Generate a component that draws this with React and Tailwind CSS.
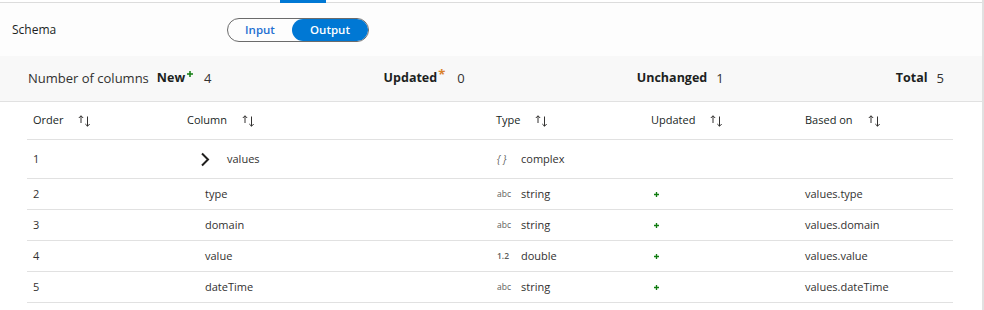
import React from "react";

function SortIcon() {
  return (
    <svg width="13" height="12" viewBox="0 0 13 12" fill="none" stroke="#323130" strokeWidth="1" className="ml-[15px] shrink-0">
      <path d="M3 0.8V8" />
      <path d="M0.8 3L3 0.8L5.2 3" />
      <path d="M9.5 1.5V11.2" />
      <path d="M7.3 9L9.5 11.2L11.7 9" />
    </svg>
  );
}

function Plus({ size = 6, w = 1.6 }) {
  return (
    <svg width={size} height={size} viewBox="0 0 6 6" stroke="#107c10" strokeWidth={w}>
      <path d="M3 0V6M0 3H6" />
    </svg>
  );
}

const rows = [
  { n: "2", name: "type", icon: "abc", type: "string", based: "values.type" },
  { n: "3", name: "domain", icon: "abc", type: "string", based: "values.domain" },
  { n: "4", name: "value", icon: "1.2", type: "double", based: "values.value" },
  { n: "5", name: "dateTime", icon: "abc", type: "string", based: "values.dateTime" },
];

function Header({ label }) {
  return (
    <div className="flex items-center px-[6px]">
      <span className="font-medium text-[#201f1e]">{label}</span>
      <SortIcon />
    </div>
  );
}

export default function App() {
  return (
    <div className="w-[984px] h-[310px] bg-white border-r-2 border-[#e1e1e1] font-['Open_Sans',sans-serif] text-[#323130] overflow-hidden">
      <div className="h-[3px] border-b border-[#dcdcdc]">
        <div className="ml-[280px] w-[46px] h-[3px] bg-[#0078d4]" />
      </div>

      <div className="h-[53px] flex items-center pl-[12px] bg-[#fdfdfd]">
        <div className="w-[215px] text-[12px] font-medium text-[#201f1e]">Schema</div>
        <div className="flex items-center h-[24px] w-[142px] rounded-full border border-[#6b6b6b] overflow-hidden">
          <div className="flex-1 text-center text-[11.5px] font-semibold text-[#1f6fd1]">Input</div>
          <div className="w-[76px] h-full rounded-full bg-[#0078d4] flex items-center justify-center text-[11.5px] font-semibold text-white">
            Output
          </div>
        </div>
      </div>

      <div className="h-[46px] bg-[#f8f8f8] border-b border-[#e1e1e1] flex items-center justify-between pl-[28px] pr-[38px] text-[13px]">
        <div className="flex items-center">
          <span>Number of columns</span>
          <span className="ml-[8px] font-bold text-[12.5px] text-[#201f1e]">New</span>
          <span className="ml-[2px] -mt-[9px]"><Plus size={6} w={1.5} /></span>
          <span className="ml-[11px]">4</span>
        </div>
        <div className="flex items-center">
          <span className="font-bold text-[12.5px] text-[#201f1e]">Updated</span>
          <span className="ml-[1px] -mt-[8px] text-[13px] font-bold text-[#d9822b] leading-none">*</span>
          <span className="ml-[12px]">0</span>
        </div>
        <div className="flex items-center">
          <span className="font-bold text-[12.5px] text-[#201f1e]">Unchanged</span>
          <span className="ml-[9px]">1</span>
        </div>
        <div className="flex items-center">
          <span className="font-bold text-[12.5px] text-[#201f1e]">Total</span>
          <span className="ml-[9px]">5</span>
        </div>
      </div>

      <div className="ml-[27px] w-[926px] text-[11px]">
        <div className="grid grid-cols-[154px_309px_155px_154px_154px] h-[38px] border-b border-[#e1e1e1] items-center">
          <Header label="Order" />
          <Header label="Column" />
          <Header label="Type" />
          <Header label="Updated" />
          <Header label="Based on" />
        </div>

        <div className="grid grid-cols-[154px_309px_155px_154px_154px] h-[39px] border-b border-[#e1e1e1] items-center">
          <div className="px-[6px]">1</div>
          <div className="px-[6px] flex items-center">
            <svg width="10" height="15" viewBox="0 0 10 15" fill="none" stroke="#201f1e" strokeWidth="2" className="ml-[13px]">
              <path d="M2 1.5L8 7.5L2 13.5" />
            </svg>
            <span className="ml-[17px]">values</span>
          </div>
          <div className="px-[6px] flex items-center">
            <span className="w-[25px] text-[10px] italic text-[#605e5c] pl-[1px]">{"{ }"}</span>
            <span>complex</span>
          </div>
          <div />
          <div />
        </div>

        {rows.map((r) => (
          <div key={r.n} className="grid grid-cols-[154px_309px_155px_154px_154px] h-[31px] border-b border-[#e1e1e1] items-center">
            <div className="px-[6px]">{r.n}</div>
            <div className="px-[6px]">
              <span className="ml-[18px]">{r.name}</span>
            </div>
            <div className="px-[6px] flex items-center">
              <span className={r.icon === "1.2" ? "w-[25px] text-[8.5px] font-semibold text-[#605e5c] pl-[1px]" : "w-[25px] text-[8.5px] text-[#605e5c] pl-[1px]"}>{r.icon}</span>
              <span>{r.type}</span>
            </div>
            <div className="px-[6px] flex items-center">
              <span className="ml-[3px] flex"><Plus size={5} w={1.6} /></span>
            </div>
            <div className="px-[6px]">{r.based}</div>
          </div>
        ))}
      </div>
    </div>
  );
}
